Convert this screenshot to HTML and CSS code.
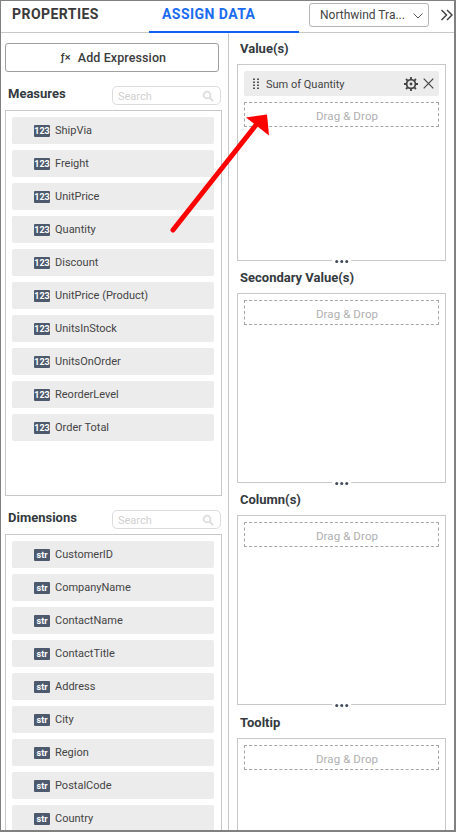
FILE: index.html
```html
<!DOCTYPE html>
<html lang="en">
<head>
<meta charset="utf-8">
<title>Assign Data</title>
<link rel="stylesheet" href="styles.css">
</head>
<body>
<div class="panel">
  <header class="tabs">
    <div class="tab">PROPERTIES</div>
    <div class="tab active">ASSIGN DATA</div>
    <div class="select"><span>Northwind Tra...</span>
      <svg class="chev" width="12" height="8" viewBox="0 0 12 8"><path d="M1.5 1.5l4.5 4.5 4.5-4.5" fill="none" stroke="#555" stroke-width="1"/></svg>
    </div>
    <svg class="expand" width="13" height="12" viewBox="0 0 13 12"><path d="M1.5 1l5 5-5 5M7 1l5 5-5 5" fill="none" stroke="#444" stroke-width="1.5"/></svg>
  </header>
  <div class="body">
    <section class="left">
      <button class="expr"><span class="fx">ƒ×</span>Add Expression</button>
      <div class="lab-row"><h2>Measures</h2>
        <div class="search"><span>Search</span><svg width="12" height="12" viewBox="0 0 12 12"><circle cx="5" cy="5" r="3.4" fill="none" stroke="#ddd" stroke-width="1.8"/><path d="M7.5 7.5l3.5 3.5" stroke="#ddd" stroke-width="2"/></svg></div>
      </div>
      <div class="list measures">
        <div class="item"><b>123</b>ShipVia</div>
        <div class="item"><b>123</b>Freight</div>
        <div class="item"><b>123</b>UnitPrice</div>
        <div class="item"><b>123</b>Quantity</div>
        <div class="item"><b>123</b>Discount</div>
        <div class="item"><b>123</b>UnitPrice (Product)</div>
        <div class="item"><b>123</b>UnitsInStock</div>
        <div class="item"><b>123</b>UnitsOnOrder</div>
        <div class="item"><b>123</b>ReorderLevel</div>
        <div class="item"><b>123</b>Order Total</div>
      </div>
      <div class="lab-row dims"><h2>Dimensions</h2>
        <div class="search"><span>Search</span><svg width="12" height="12" viewBox="0 0 12 12"><circle cx="5" cy="5" r="3.4" fill="none" stroke="#ddd" stroke-width="1.8"/><path d="M7.5 7.5l3.5 3.5" stroke="#ddd" stroke-width="2"/></svg></div>
      </div>
      <div class="list">
        <div class="item"><b>str</b>CustomerID</div>
        <div class="item"><b>str</b>CompanyName</div>
        <div class="item"><b>str</b>ContactName</div>
        <div class="item"><b>str</b>ContactTitle</div>
        <div class="item"><b>str</b>Address</div>
        <div class="item"><b>str</b>City</div>
        <div class="item"><b>str</b>Region</div>
        <div class="item"><b>str</b>PostalCode</div>
        <div class="item"><b>str</b>Country</div>
      </div>
    </section>
    <section class="right">
      <h2 class="zone-title">Value(s)</h2>
      <div class="zone first">
        <div class="pill">
          <svg class="grip" width="6" height="12" viewBox="0 0 6 12"><path d="M0 .5h2v1.4H0zM4 .5h2v1.4H4zM0 3.5h2v1.4H0zM4 3.5h2v1.4H4zM0 6.5h2v1.4H0zM4 6.5h2v1.4H4zM0 9.5h2v1.4H0zM4 9.5h2v1.4H4z" fill="#555"/></svg>
          <span>Sum of Quantity</span>
          <svg class="gear" width="14" height="14" viewBox="0 0 14 14"><circle cx="7" cy="7" r="4.4" fill="none" stroke="#444" stroke-width="1.8"/><circle cx="7" cy="7" r="1.4" fill="#444"/><path d="M7 0v2.4M7 11.6V14M0 7h2.4M11.6 7H14M2 2l1.7 1.7M10.3 10.3L12 12M12 2l-1.7 1.7M3.7 10.3L2 12" stroke="#444" stroke-width="1.8"/></svg>
          <svg class="close" width="11" height="11" viewBox="0 0 11 11"><path d="M.7.7l9.6 9.6M10.3.7L.7 10.3" stroke="#444" stroke-width="1.2"/></svg>
        </div>
        <div class="drop">Drag &amp; Drop</div>
        <div class="handle"><i></i><i></i><i></i></div>
      </div>
      <h2 class="zone-title">Secondary Value(s)</h2>
      <div class="zone">
        <div class="drop">Drag &amp; Drop</div>
        <div class="handle"><i></i><i></i><i></i></div>
      </div>
      <h2 class="zone-title">Column(s)</h2>
      <div class="zone tail">
        <div class="drop">Drag &amp; Drop</div>
        <div class="handle"><i></i><i></i><i></i></div>
      </div>
      <h2 class="zone-title">Tooltip</h2>
      <div class="zone">
        <div class="drop">Drag &amp; Drop</div>
      </div>
    </section>
  </div>
  <svg class="arrow" width="456" height="832" viewBox="0 0 456 832"><path d="M173 230L256 125" stroke="#ff0000" stroke-width="5" stroke-linecap="round"/><path d="M246 117.5L267 114.5L269 135.5Z" fill="#ff0000"/></svg>
</div>
</body>
</html>
```
FILE: styles.css
```css
* { box-sizing: border-box; }
html, body { margin: 0; padding: 0; background: #fff; }
body { width: 456px; height: 832px; overflow: hidden; font-family: Roboto, sans-serif; color: #333; }
.panel { position: relative; width: 456px; height: 832px; border: 1px solid #808080; border-bottom-width: 2px; border-right-width: 2px; overflow: hidden; display: flex; flex-direction: column; }
.tabs { height: 32px; flex: none; border-bottom: 1px solid #c8c8c8; display: flex; align-items: flex-start; }
.tab { font-size: 14px; font-weight: 700; letter-spacing: 0.45px; color: #3a3a3a; line-height: 27px; }
.tab:first-child { width: 148px; padding-left: 11px; }
.tab.active { width: 150px; height: 32px; padding-left: 13px; color: #1a6cf0; border-bottom: 2px solid #0f62f0; }
.select { margin: 2px 0 0 10px; width: 120px; height: 24px; border: 1px solid #b4b4b4; border-radius: 3px; display: flex; align-items: center; padding-left: 10px; font-size: 12px; color: #444; position: relative; }
.chev { position: absolute; right: 4px; top: 8px; }
.expand { margin: 8px 0 0 11px; }
.body { flex: 1; display: flex; min-height: 0; }
.left { width: 228px; flex: none; border-right: 1px solid #c8c8c8; padding: 10px 6px 0 4px; }
.expr { display: flex; align-items: center; justify-content: center; width: 214px; height: 29px; background: #fff; border: 1px solid #9e9e9e; border-radius: 3px; font: 500 12.5px Roboto, sans-serif; color: #3c3c3c; letter-spacing: 0.1px; padding: 0 0 0 3px; }
.fx { margin-right: 7px; font-size: 11px; }
.lab-row { display: flex; justify-content: space-between; align-items: flex-start; height: 25px; margin-top: 13px; padding-left: 3px; }
h2 { margin: 0; font-size: 13px; font-weight: 700; color: #343a40; line-height: 18px; }
.search { width: 109px; height: 19px; margin: 1px 1px 0 0; border: 1px solid #dcdcdc; border-radius: 5px; display: flex; align-items: center; justify-content: space-between; padding: 0 6px 0 5px; font-size: 11px; color: #d0d0d0; }
.search span { padding-top: 2px; }
.list { width: 217px; border: 1px solid #c8c8c8; padding: 6px; overflow: hidden; }
.measures { height: 386px; }
.dims { margin-top: 13px; }
.item { width: 202px; height: 27px; margin-bottom: 6px; background: #ececec; border-radius: 2px; display: flex; align-items: center; padding-left: 22px; font-size: 11px; color: #444; }
.item b { width: 16px; height: 12px; margin-right: 5px; background: #4d5a6e; color: #fff; font-size: 9px; font-weight: 700; line-height: 12px; text-align: center; border-radius: 1px; flex: none; }
.right { flex: 1; padding: 7px 8px 0 8px; }
.zone-title { padding-left: 3px; height: 19px; line-height: 18px; margin-bottom: 5px; }
.zone { position: relative; width: 209px; height: 190px; border: 1px solid #c8c8c8; padding: 6px; margin-bottom: 8px; }
.zone.first { height: 197px; }
.zone.tail { margin-bottom: 9px; }
.pill { height: 25px; background: #ececec; border-radius: 2px; display: flex; align-items: center; padding-left: 9px; font-size: 11px; color: #444; margin-bottom: 6px; }
.pill span { margin-left: 7px; padding-top: 2px; flex: 1; }
.gear { margin-right: 5px; }
.close { margin-right: 5px; }
.drop { height: 25px; border: 1px dashed #a6a6a6; padding-left: 11px; text-align: center; line-height: 26px; font-size: 11.5px; color: #b0b0b0; letter-spacing: 0.1px; }
.handle { position: absolute; left: 50%; bottom: -3px; transform: translateX(-50%); display: flex; gap: 1.5px; background: #fff; padding: 0 3px; }
.handle i { width: 3.5px; height: 3.5px; border-radius: 50%; background: #3f4a5a; display: block; }
.arrow { position: absolute; left: -1px; top: -1px; pointer-events: none; }
```
